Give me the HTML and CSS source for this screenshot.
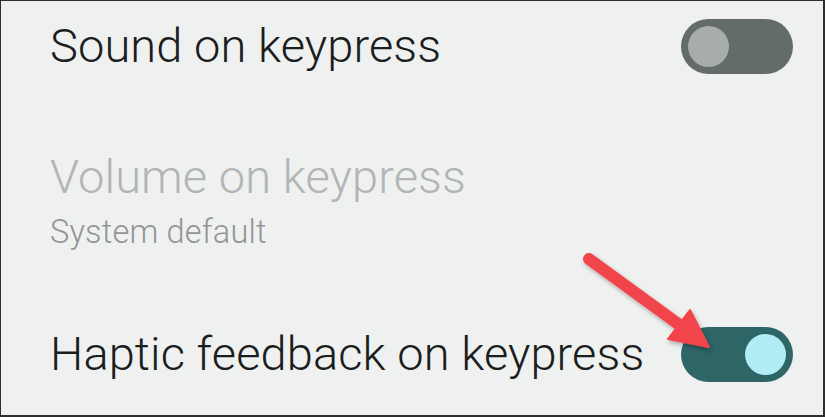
FILE: index.html
```html
<!DOCTYPE html>
<html lang="en">
<head>
    <meta charset="UTF-8">
    <meta name="viewport" content="width=device-width, initial-scale=1.0">
    <title>Keyboard sound and vibration</title>
    <link rel="stylesheet" href="styles.css">
</head>
<body>

    <div class="screen">
        <!-- Sound -->
        <div class="row row-sound">
            <div class="label">Sound on keypress</div>
            <div class="switch switch-off"><span class="knob"></span></div>
        </div>

        <!-- Volume (disabled) -->
        <div class="row-volume">
            <div class="label label-disabled">Volume on keypress</div>
            <div class="sublabel">System default</div>
        </div>

        <!-- Haptic -->
        <div class="row row-haptic">
            <div class="label">Haptic feedback on keypress</div>
            <div class="switch switch-on"><span class="knob"></span></div>
        </div>

        <!-- Callout arrow -->
        <svg class="arrow" width="170" height="130" viewBox="0 0 170 130">
            <defs>
                <filter id="shadow" x="-20%" y="-20%" width="140%" height="140%">
                    <feDropShadow dx="1.5" dy="2.5" stdDeviation="2" flood-color="#000" flood-opacity="0.3"/>
                </filter>
            </defs>
            <g filter="url(#shadow)" fill="#f2444b" stroke="#f2444b">
                <line x1="29" y1="19" x2="121" y2="86" stroke-width="12" stroke-linecap="round"/>
                <polygon points="149,107 130,70 108,99" stroke-width="2" stroke-linejoin="round"/>
            </g>
        </svg>
    </div>

</body>
</html>
```

FILE: styles.css
```css
body {
    margin: 0;
    padding: 0;
    font-family: Roboto, "Noto Sans", sans-serif;
}

.screen {
    position: relative; /* for the arrow overlay */
    width: 825px;
    height: 417px;
    box-sizing: border-box;
    background: #eff1f0;
    border-top: 1px solid #2e2e2e;
    border-left: 1px solid #2e2e2e;
    border-right: 2px solid #2e2e2e;
    border-bottom: 2px solid #2e2e2e;
    padding: 0 30px 0 49px;
    display: flex;
    flex-direction: column;
}

.row {
    display: flex;
    align-items: center;
    justify-content: space-between;
    height: 90px;
    flex-shrink: 0;
}

.row-volume {
    height: 218px;
    padding-top: 58px;
    box-sizing: border-box;
    flex-shrink: 0;
}

.label {
    font-size: 47px;
    font-weight: 300;
    line-height: 56px;
    letter-spacing: 0.1px;
    color: #1c1d1d;
}

.label-disabled {
    color: #b3b5b4;
}

.sublabel {
    font-size: 32.5px;
    font-weight: 300;
    line-height: 44px;
    letter-spacing: 0.2px;
    color: #939594;
    margin-top: 5px;
}

.switch {
    width: 112px;
    height: 55px;
    border-radius: 28px;
    display: flex;
    align-items: center;
    padding: 0 7px;
    box-sizing: border-box;
}

.switch .knob {
    width: 41px;
    height: 41px;
    border-radius: 50%;
}

.switch-off {
    background: #646c69;
}

.switch-off .knob {
    background: #a7adab;
}

.switch-on {
    background: #2e6566;
    justify-content: flex-end;
}

.switch-on .knob {
    background: #b0edf4;
}

.arrow {
    position: absolute;
    left: 559px;
    top: 239px;
}
```
